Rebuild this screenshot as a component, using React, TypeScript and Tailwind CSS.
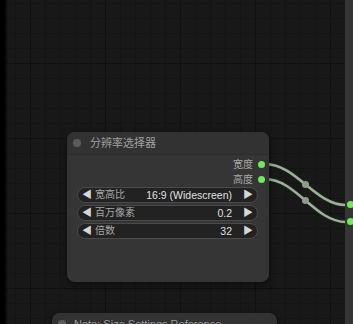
import React from "react";

const FONT = { fontFamily: '"Liberation Sans", "Noto Sans CJK SC", sans-serif' };

const W = 353;
const H = 324;

const vLines = Array.from({ length: 24 }, (_, i) => i * 15);
const hLines = Array.from({ length: 23 }, (_, i) => 3 + i * 15);

function Widget({ label, value }: { label: string; value: string }) {
  return (
    <div className="flex h-[16px] items-center rounded-full border border-[#4a4a4a] bg-[#222222] px-[4px] text-[10px] leading-none">
      <span className="text-[10px] text-[#d6d6d6]">◀</span>
      <span className="ml-[3px] text-[#a8a8a8]">{label}</span>
      <span className="ml-auto text-[10.5px] text-[#e0e0e0]">{value}</span>
      <span className="ml-[11px] text-[10px] text-[#d6d6d6]">▶</span>
    </div>
  );
}

function Output({ label }: { label: string }) {
  return (
    <div className="flex h-[15px] items-center justify-end gap-[5px] pr-[4px] text-[10px] text-[#a8a8a8]">
      <span>{label}</span>
      <span className="h-[7px] w-[7px] rounded-full bg-[#72e85f]" />
    </div>
  );
}

export default function App() {
  return (
    <div className="relative h-[324px] w-[353px] overflow-hidden bg-[#181818]" style={FONT}>
      <svg className="absolute inset-0" width={W} height={H}>
        {vLines.map((x) => (
          <line key={"v" + x} x1={x + 0.5} y1={0} x2={x + 0.5} y2={H} stroke={x % 75 === 30 ? "#101010" : "#141414"} strokeWidth={1} />
        ))}
        {hLines.map((y) => (
          <line key={"h" + y} x1={0} y1={y + 0.5} x2={W} y2={y + 0.5} stroke={y % 75 === 63 ? "#101010" : "#141414"} strokeWidth={1} />
        ))}
        {[
          [164, 205],
          [179, 222],
        ].map(([a, b]) => (
          <g key={a}>
            <path d={`M265 ${a} C 296 ${a}, 315 ${b}, 346 ${b}`} fill="none" stroke="#1e221d" strokeWidth={4.5} />
            <path d={`M265 ${a} C 296 ${a}, 315 ${b}, 346 ${b}`} fill="none" stroke="#9fb09a" strokeWidth={2.5} />
            <circle cx={305.5} cy={(a + b) / 2} r={3.5} fill="#8d9c89" />
          </g>
        ))}
      </svg>

      <div className="absolute left-0 top-0 h-full w-[8px] bg-gradient-to-r from-black via-black to-transparent" />

      <div className="absolute left-[345px] top-0 h-full w-[20px] bg-[#353535]">
        <span className="absolute left-[2px] top-[201px] h-[7px] w-[7px] rounded-full bg-[#72e85f]" />
        <span className="absolute left-[2px] top-[218px] h-[7px] w-[7px] rounded-full bg-[#72e85f]" />
      </div>

      <div className="absolute left-[67px] top-[132px] flex h-[150px] w-[202px] flex-col rounded-[8px] bg-[#353535] shadow-[0_2px_6px_rgba(0,0,0,0.5)]">
        <div className="flex h-[23px] items-center gap-[9px] rounded-t-[8px] border-b border-[#2c2c2c] bg-[#323232] pl-[6px]">
          <span className="h-[8px] w-[8px] rounded-full bg-[#5c5c5c]" />
          <span className="text-[11px] text-[#a0a0a0]">分辨率选择器</span>
        </div>
        <div className="pt-[2px]">
          <Output label="宽度" />
          <Output label="高度" />
        </div>
        <div className="mx-[10px] flex w-[181px] flex-col gap-[2px]">
          <Widget label="宽高比" value="16:9 (Widescreen)" />
          <Widget label="百万像素" value="0.2" />
          <Widget label="倍数" value="32" />
        </div>
      </div>

      <div className="absolute left-[52px] top-[313px] h-[40px] w-[225px] rounded-[8px] bg-[#323232] shadow-[0_2px_6px_rgba(0,0,0,0.5)]">
        <div className="flex h-[22px] items-center gap-[8px] pl-[6px]">
          <span className="h-[8px] w-[8px] rounded-full bg-[#5c5c5c]" />
          <span className="text-[11px] text-[#9a9a9a]">Note: Size Settings Reference</span>
        </div>
      </div>
    </div>
  );
}
